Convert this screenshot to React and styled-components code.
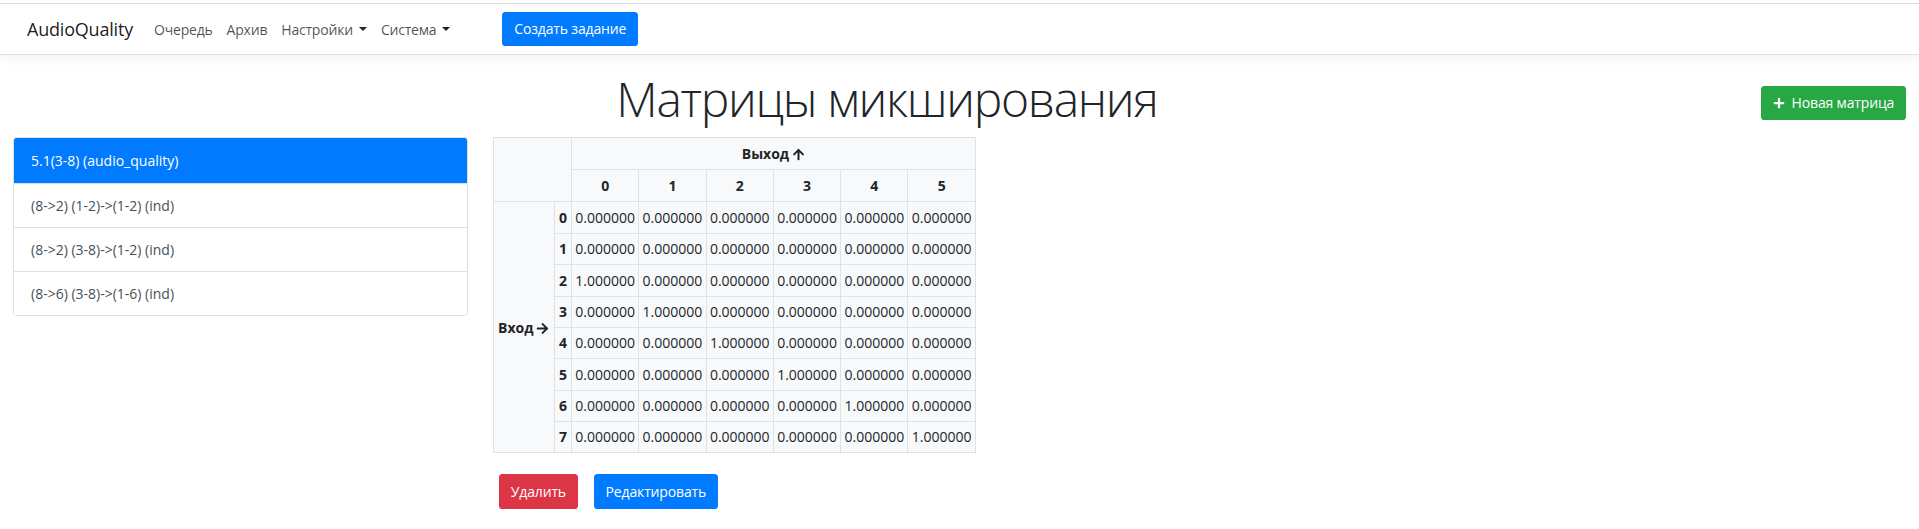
import React from "react";
import styled, { createGlobalStyle } from "styled-components";
import { FaArrowUp, FaArrowRight, FaPlus } from "react-icons/fa";

const GlobalStyle = createGlobalStyle`
  body {
    margin: 0;
    background: #fff;
    color: #212529;
    font-family: "Open Sans", "Noto Sans", sans-serif;
    font-size: 14.4px;
    line-height: 1.5;
  }
`;

const Navbar = styled.nav`
  margin-top: 3px;
  height: 50px;
  display: flex;
  align-items: center;
  padding: 0 27px;
  border-top: 1px solid #dcdcdc;
  border-bottom: 1px solid #dee2e6;
  box-shadow: 0 4px 12px rgba(0, 0, 0, 0.05);
  background: #fff;
`;

const Brand = styled.a`
  font-size: 18px;
  color: rgba(0, 0, 0, 0.9);
  margin-right: 14px;
  text-decoration: none;
  letter-spacing: -0.2px;
`;

const NavLink = styled.a`
  padding: 0 7px;
  color: rgba(0, 0, 0, 0.7);
  text-decoration: none;
  font-size: 14px;
  letter-spacing: -0.2px;
  display: flex;
  align-items: center;

  ${(p) =>
    p.$dropdown &&
    `
    &::after {
      content: "";
      margin-left: 6px;
      border-top: 4.5px solid #222;
      border-left: 4px solid transparent;
      border-right: 4px solid transparent;
    }
  `}
`;

const Button = styled.button`
  font-family: inherit;
  font-size: 14px;
  line-height: 21.6px;
  letter-spacing: -0.15px;
  padding: 5.4px 10.8px;
  border: 1px solid transparent;
  border-radius: 3.6px;
  color: #fff;
  cursor: pointer;
  background: ${(p) =>
    p.$variant === "danger" ? "#dc3545" : p.$variant === "success" ? "#28a745" : "#007bff"};
  display: inline-flex;
  align-items: center;
  gap: 7px;
`;

const CreateButton = styled(Button)`
  margin-left: 45px;
`;

const Main = styled.div`
  padding: 0 13px;
`;

const HeaderRow = styled.div`
  display: flex;
  align-items: flex-start;
  margin-top: 14px;
`;

const Title = styled.h1`
  flex: 1;
  margin: 0 0 8px;
  text-align: center;
  font-size: 48px;
  font-weight: 300;
  line-height: 60px;
  letter-spacing: -1.3px;
  color: #212529;
`;

const NewButton = styled(Button)`
  margin-top: 17px;
`;

const ContentRow = styled.div`
  display: flex;
  gap: 25px;
`;

const ListGroup = styled.div`
  width: 453px;
  flex-shrink: 0;
  align-self: flex-start;
  border: 1px solid rgba(0, 0, 0, 0.125);
  border-radius: 3.6px;
  overflow: hidden;
`;

const ListItem = styled.a`
  display: block;
  padding: ${(p) => (p.$active ? "11.6px 17px" : "10.8px 17px")};
  line-height: 21.6px;
  font-size: 14px;
  text-decoration: none;
  color: ${(p) => (p.$active ? "#fff" : "#495057")};
  background: ${(p) => (p.$active ? "#007bff" : "#fff")};
  & + & {
    border-top: 1px solid rgba(0, 0, 0, 0.125);
  }
`;

const MatrixColumn = styled.div`
  display: flex;
  flex-direction: column;
`;

const Matrix = styled.table`
  border-collapse: collapse;
  background: #f8f9fa;
  font-size: 14px;
  table-layout: fixed;
  width: 482px;
`;

const Cell = styled.td`
  border: 1px solid #dee2e6;
  padding: ${(p) => (p.$head ? "4.8px 0" : "4.4px 0")};
  line-height: 21.6px;
  text-align: ${(p) => (p.$left ? "left" : "center")};
  font-weight: ${(p) => (p.$bold ? 700 : 400)};
  color: #212529;
  white-space: nowrap;
  ${(p) => p.$left && "padding-left: 4px;"}

  svg {
    font-size: 13px;
    vertical-align: -2px;
    margin-left: 3px;
  }
`;

const ActionRow = styled.div`
  display: flex;
  gap: 16px;
  margin: 21px 0 0 6px;
`;

const outputs = [0, 1, 2, 3, 4, 5];
const inputs = [0, 1, 2, 3, 4, 5, 6, 7];
const matrices = [
  "5.1(3-8) (audio_quality)",
  "(8->2) (1-2)->(1-2) (ind)",
  "(8->2) (3-8)->(1-2) (ind)",
  "(8->6) (3-8)->(1-6) (ind)",
];

const value = (i, o) => (i - 2 === o ? "1.000000" : "0.000000");

export default function App() {
  return (
    <>
      <GlobalStyle />
      <Navbar>
        <Brand>AudioQuality</Brand>
        <NavLink>Очередь</NavLink>
        <NavLink>Архив</NavLink>
        <NavLink $dropdown>Настройки</NavLink>
        <NavLink $dropdown>Система</NavLink>
        <CreateButton>Создать задание</CreateButton>
      </Navbar>
      <Main>
        <HeaderRow>
          <Title>Матрицы микширования</Title>
          <NewButton $variant="success">
            <FaPlus size={12} />
            Новая матрица
          </NewButton>
        </HeaderRow>
        <ContentRow>
          <ListGroup>
            {matrices.map((m, i) => (
              <ListItem key={m} $active={i === 0}>
                {m}
              </ListItem>
            ))}
          </ListGroup>
          <MatrixColumn>
            <Matrix>
              <colgroup>
                <col style={{ width: 61 }} />
                <col style={{ width: 17 }} />
                {outputs.map((o) => (
                  <col key={o} style={{ width: 67.3 }} />
                ))}
              </colgroup>
              <thead>
                <tr>
                  <Cell as="th" colSpan={2} rowSpan={2} />
                  <Cell as="th" colSpan={6} $bold $head>
                    Выход
                    <FaArrowUp />
                  </Cell>
                </tr>
                <tr>
                  {outputs.map((o) => (
                    <Cell as="th" key={o} $bold $head>
                      {o}
                    </Cell>
                  ))}
                </tr>
              </thead>
              <tbody>
                {inputs.map((i) => (
                  <tr key={i}>
                    {i === 0 && (
                      <Cell as="th" rowSpan={8} $bold $left>
                        Вход
                        <FaArrowRight />
                      </Cell>
                    )}
                    <Cell as="th" $bold>
                      {i}
                    </Cell>
                    {outputs.map((o) => (
                      <Cell key={o}>{value(i, o)}</Cell>
                    ))}
                  </tr>
                ))}
              </tbody>
            </Matrix>
            <ActionRow>
              <Button $variant="danger">Удалить</Button>
              <Button>Редактировать</Button>
            </ActionRow>
          </MatrixColumn>
        </ContentRow>
      </Main>
    </>
  );
}
